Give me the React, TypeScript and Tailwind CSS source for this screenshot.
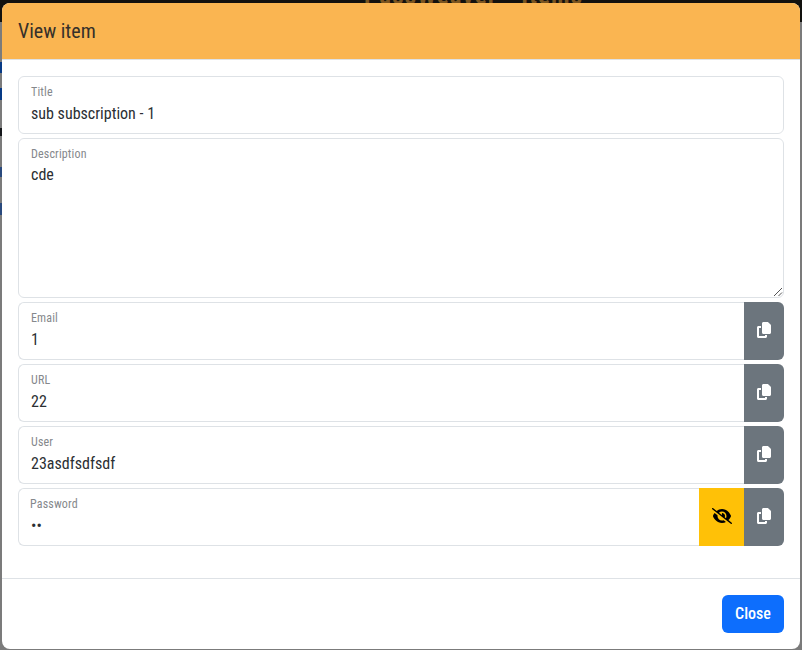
import { FaCopy, FaEyeSlash } from "react-icons/fa6";

function CopyButton() {
  return (
    <button className="flex w-10 items-center justify-center rounded-r-md bg-[#6c757d] text-white" aria-label="Copy">
      <FaCopy className="h-4 w-[14px] -translate-y-px" />
    </button>
  );
}

function Field({ label, value, copy, secret }: { label: string; value: string; copy?: boolean; secret?: boolean }) {
  return (
    <div className="mb-1 flex h-[58px]">
      <div
        className={
          "min-w-0 flex-1 border border-[#dee2e6] pl-3 pt-[5px] " + (copy ? "rounded-l-md border-r-0" : "rounded-md")
        }
      >
        <div className={"text-[12px] leading-5 tracking-[0.15px] text-[#85888c] " + (secret ? "-ml-px" : "")}>{label}</div>
        <div className="text-base leading-6 text-[#2b2f33]">{value}</div>
      </div>
      {secret && (
        <button className="flex w-[45px] items-center justify-center bg-[#ffc107] text-black" aria-label="Show">
          <FaEyeSlash className="h-4 w-5 -translate-y-px" />
        </button>
      )}
      {copy && <CopyButton />}
    </div>
  );
}

export default function App() {
  return (
    <div className="relative h-[650px] w-[802px] overflow-hidden bg-[#7b7b7b] font-['Roboto_Condensed',Roboto,sans-serif] [font-stretch:75%]">
      <div className="h-[22px] bg-[#12110e]">
        <div className="absolute left-[364px] top-[-18px] text-[25px] leading-7 font-bold tracking-[1.15px] text-[#7a541f] whitespace-nowrap">PassWeaver - Items</div>
      </div>
      <div className="absolute left-0 top-[62px] h-[11px] w-3 bg-[#073a86]" />
      <div className="absolute left-0 top-[88px] h-3 w-3 bg-[#073a86]" />
      <div className="absolute left-0 top-[128px] h-2 w-3 bg-[#15171a]" />
      <div className="absolute left-0 top-[167px] h-[10px] w-3 bg-[#29497d]" />
      <div className="absolute left-0 top-[203px] h-3 w-3 bg-[#29497d]" />
      <div className="absolute left-[2px] top-[3px] flex h-[646px] w-[798px] flex-col overflow-hidden rounded-lg bg-white">
        <header className="h-[57px] border-b border-[#dee2e6] bg-[#fab551] pl-4 pt-[13px] text-[20px] leading-[30px] text-[#36302a]">
          View item
        </header>
        <main className="flex-1 px-4 pt-4">
          <Field label="Title" value="sub subscription - 1" />
          <div className="relative mb-1 h-40 rounded-md border border-[#dee2e6] pl-3 pt-[5px]">
            <div className="text-[12px] leading-5 tracking-[0.15px] text-[#85888c]">Description</div>
            <div className="-mt-px text-base leading-6 text-[#2b2f33]">cde</div>
            <svg className="absolute bottom-0 right-0 h-[10px] w-[10px]" viewBox="0 0 10 10" fill="none" stroke="#555" strokeWidth="1">
              <path d="M1 9L9 1M5.500 9L9 5.500" />
            </svg>
          </div>
          <Field label="Email" value="1" copy />
          <Field label="URL" value="22" copy />
          <Field label="User" value="23asdfsdfsdf" copy />
          <Field label="Password" value="••" copy secret />
        </main>
        <footer className="flex h-[71px] justify-end border-t border-[#dee2e6] px-4 pt-4">
          <button className="h-[38px] w-[62px] rounded-md bg-[#0d6efd] pb-px text-base font-medium text-white">Close</button>
        </footer>
      </div>
    </div>
  );
}
